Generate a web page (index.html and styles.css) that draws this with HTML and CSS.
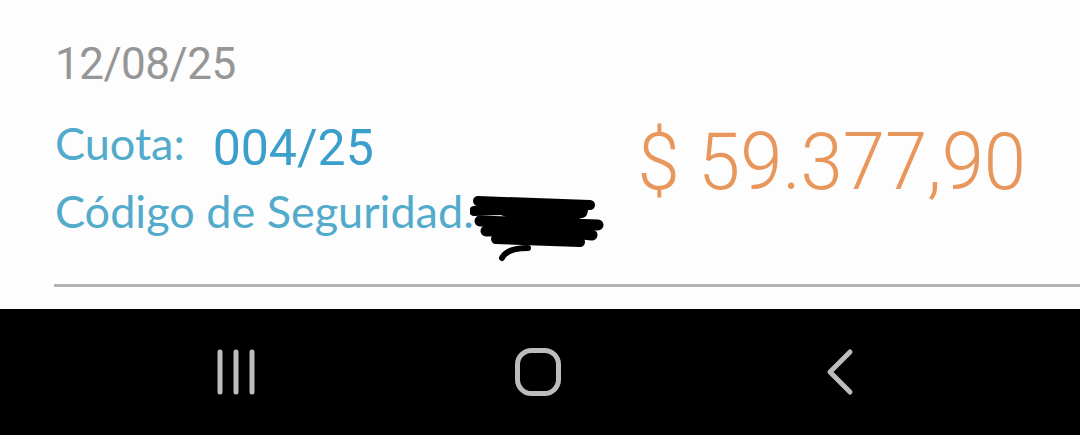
FILE: index.html
```html
<!DOCTYPE html>
<html lang="es">
<head>
<meta charset="utf-8">
<link rel="stylesheet" href="styles.css">
</head>
<body>
<main class="screen">
  <section class="item">
    <div class="info">
      <div class="date">12/08/25</div>
      <div class="cuota">
        <span class="label">Cuota:</span>
        <span class="cuota-num">004/25</span>
      </div>
      <div class="codigo">
        <span class="label">Código de Seguridad.</span><span class="redact"><svg class="scribble" width="140" height="75" viewBox="0 0 140 75">
          <g stroke="#000" stroke-linecap="round" fill="none">
            <path d="M8 9 L120 13" stroke-width="10"/>
            <path d="M4 19 Q60 16 112 21" stroke-width="10"/>
            <path d="M10 29 L128 33" stroke-width="11"/>
            <path d="M16 39 Q70 37 122 43" stroke-width="11"/>
            <path d="M26 47 L110 50" stroke-width="10"/>
            <path d="M32 66 Q37 56 58 56" stroke-width="6"/>
            <path d="M30 14 L100 42" stroke-width="16"/>
            <path d="M40 40 L110 18" stroke-width="16"/>
            <path d="M60 20 L90 45" stroke-width="16"/>
          </g>
        </svg></span>
      </div>
    </div>
    <div class="amount">$ 59.377,90</div>
  </section>
  <hr class="divider">
</main>
<nav class="navbar">
  <button class="nav-btn" aria-label="Recientes">
    <svg width="46" height="48" viewBox="0 0 46 48"><g stroke="#bcbcbc" stroke-width="5" stroke-linecap="round"><path d="M7 4 V44"/><path d="M23 4 V44"/><path d="M39 4 V44"/></g></svg>
  </button>
  <button class="nav-btn" aria-label="Inicio">
    <svg width="48" height="50" viewBox="0 0 48 50"><rect x="3.5" y="3.5" width="41" height="43" rx="14" fill="none" stroke="#bcbcbc" stroke-width="5"/></svg>
  </button>
  <button class="nav-btn" aria-label="Atrás">
    <svg width="30" height="48" viewBox="0 0 30 48"><path d="M25 4 L5 24 L25 44" fill="none" stroke="#bcbcbc" stroke-width="5" stroke-linecap="round" stroke-linejoin="round"/></svg>
  </button>
</nav>
</body>
</html>
```

FILE: styles.css
```css
html, body {
  margin: 0;
  padding: 0;
}
body {
  width: 1080px;
  height: 435px;
  overflow: hidden;
  background: #fdfdfd;
}
.screen {
  height: 309px;
  background: #fdfdfd;
  display: flex;
  flex-direction: column;
}
.item {
  display: flex;
  justify-content: space-between;
  padding: 38px 54px 0 55px;
}
.info {
  display: flex;
  flex-direction: column;
}
.date {
  font-family: Roboto, sans-serif;
  font-size: 44px;
  line-height: 53px;
  color: #969696;
  letter-spacing: -0.5px;
}
.cuota {
  display: flex;
  align-items: center;
  gap: 28px;
  margin-top: 27px;
  height: 50px;
}
.label {
  font-family: Lato, sans-serif;
  font-size: 45px;
  color: #52abcb;
  line-height: 50px;
}
.cuota-num {
  font-family: Roboto, sans-serif;
  font-weight: 400;
  font-size: 50px;
  color: #3aa0cb;
  line-height: 50px;
  position: relative;
  top: 5px;
}
.codigo {
  margin-top: 18px;
  line-height: 50px;
  white-space: nowrap;
}
.redact {
  position: relative;
  display: inline-block;
  width: 0;
  height: 0;
}
.scribble {
  position: absolute;
  left: -4px;
  top: -36px;
}
.amount {
  font-family: Roboto, sans-serif;
  font-weight: 300;
  font-size: 80px;
  color: #e8975c;
  margin-top: 84px;
  line-height: 80px;
  transform: scaleX(0.95);
  transform-origin: right center;
}
.divider {
  margin: auto 0 22px 54px;
  border: 0;
  height: 3px;
  background: #b3b3b3;
}
.navbar {
  height: 126px;
  background: #000;
  display: flex;
  align-items: center;
}
.nav-btn {
  background: none;
  border: 0;
  padding: 0;
  display: flex;
  align-items: center;
  justify-content: center;
}
.nav-btn:nth-child(1) { margin-left: 213px; }
.nav-btn:nth-child(2) { margin-left: 255px; }
.nav-btn:nth-child(3) { margin-left: 263px; }
```
